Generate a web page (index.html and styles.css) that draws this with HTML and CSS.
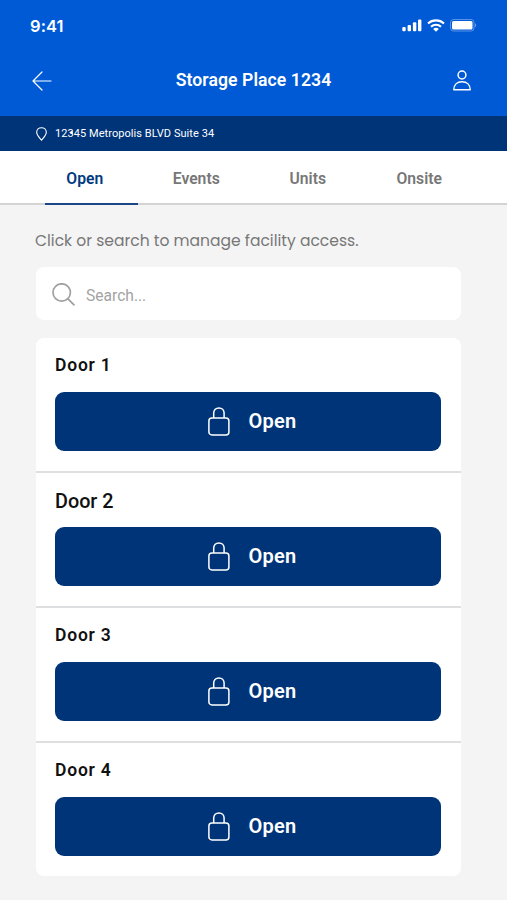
FILE: index.html
```html
<!DOCTYPE html>
<html lang="en">
<head>
    <meta charset="UTF-8">
    <title>Storage Place 1234</title>
    <meta name="viewport" content="width=device-width, initial-scale=1">
    <link rel="stylesheet" href="styles.css">
</head>
<body>
<header class="header">
    <div class="status-bar">
        <span class="time">9:41</span>
        <div class="status-icons">
            <svg class="signal" width="20" height="13" viewBox="0 0 20 13" fill="#fff">
                <rect x="0.3" y="8" width="3.4" height="4.2" rx="1"/>
                <rect x="5.6" y="5.9" width="3.4" height="6.3" rx="1"/>
                <rect x="10.9" y="3.2" width="3.4" height="9" rx="1"/>
                <rect x="16" y="0.5" width="3.4" height="11.7" rx="1"/>
            </svg>
            <svg class="wifi" width="18" height="13" viewBox="0 0 18 13" fill="none" stroke="#fff" stroke-width="2.1">
                <path d="M1 4.5C5.3 0.3 12.7 0.3 17 4.5"/>
                <path d="M4 7.7C6.8 5 11.2 5 14 7.7"/>
                <path d="M9 12.7L6.2 9.9C7.8 8.5 10.2 8.5 11.8 9.9Z" fill="#fff" stroke="none"/>
            </svg>
            <svg class="battery" width="27" height="13" viewBox="0 0 27 13">
                <rect x="0.5" y="0.5" width="23.5" height="11.5" rx="3" fill="none" stroke="#fff" stroke-opacity="0.35"/>
                <rect x="2" y="2" width="20.5" height="8.5" rx="1.5" fill="#fff"/>
                <path d="M25 4.2C26.6 4.8 26.6 7.7 25 8.3Z" fill="#fff" fill-opacity="0.4"/>
            </svg>
        </div>
    </div>
    <div class="nav-bar">
        <a class="back" href="#" aria-label="Back">
            <svg width="20" height="20" viewBox="0 0 20 20" fill="none" stroke="#fff" stroke-width="1.2" stroke-linecap="round" stroke-linejoin="round">
                <path d="M10 1L1 10L10 19M1 10H19"/>
            </svg>
        </a>
        <h1>Storage Place 1234</h1>
        <a class="profile" href="#" aria-label="Profile">
            <svg width="18" height="21" viewBox="0 0 18 21" fill="none" stroke="#fff" stroke-width="1.5" stroke-linejoin="round">
                <circle cx="9" cy="5" r="3.9"/>
                <path d="M0.8 19.8C0.8 15 4 11.8 9 11.8S17.2 15 17.2 19.8Z"/>
            </svg>
        </a>
    </div>
</header>

<div class="address">
    <svg width="11" height="14" viewBox="0 0 11 14" fill="none" stroke="#fff" stroke-width="1.1">
        <path d="M5.5 13.2C4 11.3 0.7 8.4 0.7 5.3C0.7 2.6 2.8 0.7 5.5 0.7S10.3 2.6 10.3 5.3C10.3 8.4 7 11.3 5.5 13.2Z"/>
    </svg>
    <span class="address-text">12345 Metropolis BLVD Suite 34</span>
</div>

<nav class="tabs">
    <a class="tab active" href="#">Open</a>
    <a class="tab" href="#">Events</a>
    <a class="tab" href="#">Units</a>
    <a class="tab" href="#">Onsite</a>
</nav>

<main class="container">
    <p class="intro">Click or search to manage facility access.</p>
    <label class="search">
        <svg width="23" height="23" viewBox="0 0 23 23" fill="none" stroke="#a0a0a0" stroke-width="1.7" stroke-linecap="round">
            <circle cx="9.7" cy="9.5" r="8.7"/>
            <path d="M16 15.8L22 21.8"/>
        </svg>
        <input type="text" placeholder="Search...">
    </label>
    <div class="doors">
        <section class="door">
            <h2>Door 1</h2>
            <button type="button">
                <svg class="lock" width="22" height="29" viewBox="0 0 22 29" fill="none" stroke="#fff" stroke-width="1.5">
                    <rect x="0.9" y="10.9" width="20" height="17" rx="3"/>
                    <path d="M5.7 10.9V6C5.7 2.8 8 0.9 10.9 0.9S16.1 2.8 16.1 6V10.9"/>
                </svg>
                Open
            </button>
        </section>
        <section class="door">
            <h2 class="large">Door 2</h2>
            <button type="button">
                <svg class="lock" width="22" height="29" viewBox="0 0 22 29" fill="none" stroke="#fff" stroke-width="1.5">
                    <rect x="0.9" y="10.9" width="20" height="17" rx="3"/>
                    <path d="M5.7 10.9V6C5.7 2.8 8 0.9 10.9 0.9S16.1 2.8 16.1 6V10.9"/>
                </svg>
                Open
            </button>
        </section>
        <section class="door">
            <h2>Door 3</h2>
            <button type="button">
                <svg class="lock" width="22" height="29" viewBox="0 0 22 29" fill="none" stroke="#fff" stroke-width="1.5">
                    <rect x="0.9" y="10.9" width="20" height="17" rx="3"/>
                    <path d="M5.7 10.9V6C5.7 2.8 8 0.9 10.9 0.9S16.1 2.8 16.1 6V10.9"/>
                </svg>
                Open
            </button>
        </section>
        <section class="door">
            <h2>Door 4</h2>
            <button type="button">
                <svg class="lock" width="22" height="29" viewBox="0 0 22 29" fill="none" stroke="#fff" stroke-width="1.5">
                    <rect x="0.9" y="10.9" width="20" height="17" rx="3"/>
                    <path d="M5.7 10.9V6C5.7 2.8 8 0.9 10.9 0.9S16.1 2.8 16.1 6V10.9"/>
                </svg>
                Open
            </button>
        </section>
    </div>
</main>
</body>
</html>
```
FILE: styles.css
```css
* { box-sizing: border-box; }
body { font-family: Roboto, sans-serif; background: #f4f4f4; margin: 0; min-height: 900px; }
a { color: inherit; text-decoration: none; }
svg { display: block; flex: none; }

.header { height: 116px; background: #005ad6; color: #fff; }
.status-bar { display: flex; justify-content: space-between; height: 51px; padding: 0 30px; align-items: center; }
.time { font-family: Inter, sans-serif; font-size: 16.5px; font-weight: 600; letter-spacing: 0.1px; }
.status-icons { display: flex; align-items: center; }
.wifi { margin-left: 5px; }
.battery { margin-left: 5px; }
.nav-bar { display: flex; align-items: center; justify-content: space-between; height: 58px; padding: 0 36px 0 32px; }
.nav-bar a { padding-top: 1px; }
.nav-bar h1 { margin: 0 0 0 2px; font-size: 17.6px; font-weight: 600; letter-spacing: 0.08px; }

.address { display: flex; align-items: center; gap: 8px; height: 35px; padding-left: 36px; background: #003478; color: #fff; font-size: 11px; letter-spacing: 0.06px; }
.address-text { position: relative; }
.address-text::after { content: ""; position: absolute; left: 15px; top: 4px; width: 3px; height: 3px; border-radius: 50%; background: #fff; }

.tabs { display: flex; height: 54px; padding: 0 32px 0 29px; background: #fff; border-bottom: 2px solid #d3d3d3; }
.tab { position: relative; flex: 1; text-align: center; line-height: 56px; font-size: 15.7px; font-weight: 600; color: #777; }
.tab.active { color: #003a80; }
.tab.active::after { content: ""; position: absolute; left: 16px; top: 52px; width: 93px; height: 2px; background: #1c4585; }

.container { width: 425px; margin: 0 46px 0 36px; padding-top: 24px; }
.intro { margin: 0 0 14px -1px; font-family: Poppins, Inter, sans-serif; font-size: 15.55px; line-height: 24px; color: #777; white-space: nowrap; }
.search { display: flex; align-items: center; gap: 11px; height: 53px; margin-bottom: 18px; padding: 2px 16px 0; background: #fff; border-radius: 8px; }
.search input { flex: 1; padding: 2px 0 0; border: none; outline: none; background: none; font: 15.6px Roboto, sans-serif; }
.search input::placeholder { color: #a3a3a3; }

.doors { background: #fff; border-radius: 8px; }
.door { height: 135px; padding: 15px 20px 0 19px; border-bottom: 2px solid #dedfe0; }
.door:last-child { height: 133px; border-bottom: none; }
.door h2 { margin: 0 0 15px; font-size: 17.5px; line-height: 24px; font-weight: 600; letter-spacing: 0.8px; color: #111; }
.door h2.large { padding-top: 2px; margin-bottom: 13px; font-size: 19.8px; font-weight: 500; letter-spacing: 0; }
.door button { display: flex; align-items: center; justify-content: center; gap: 19px; width: 100%; height: 59px; padding: 0 0 1px 8px; border: none; border-radius: 9px; background: #003478; color: #fff; font: 600 20px Roboto, sans-serif; letter-spacing: 0.2px; cursor: pointer; }
```
